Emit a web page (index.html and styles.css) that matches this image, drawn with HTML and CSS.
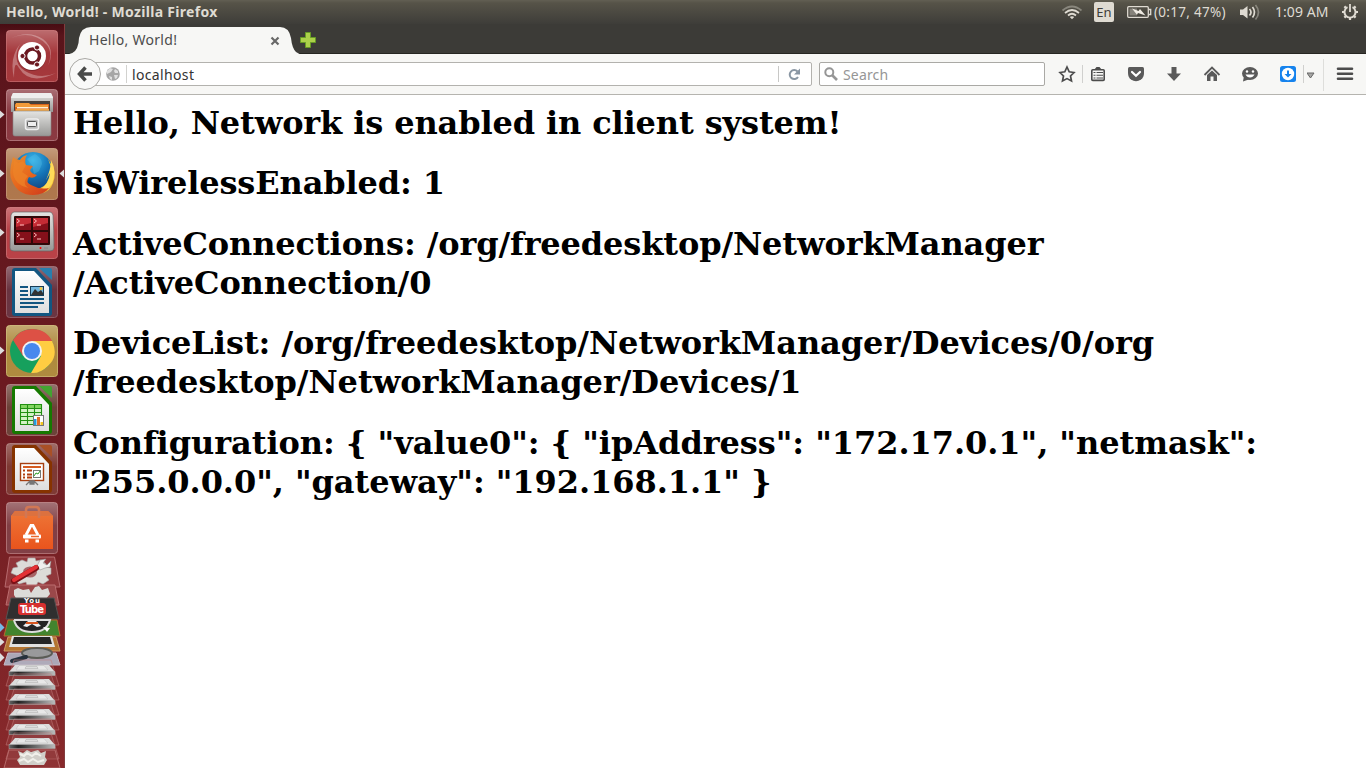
FILE: index.html
```html
<!DOCTYPE html>
<html lang="en">
<head>
<meta charset="utf-8">
<title>Hello, World!</title>
<link rel="stylesheet" href="styles.css">
</head>
<body>
<header class="panel">
  <div class="window-title">Hello, World! - Mozilla Firefox</div>
  <div class="indicators">
    <svg class="wifi" width="22" height="24" viewBox="1061 0 22 24" fill="none" stroke="#dfdbd2" stroke-width="1.7"><path d="M1062.500 10.500Q1072 2.500 1081.500 10.500" opacity=".4"/><path d="M1065 13Q1072 7 1079 13M1068 15.500Q1072 12 1076 15.500"/><path d="M1069.800 17L1072 19.300L1074.200 17Q1072 15.500 1069.800 17Z" fill="#dfdbd2" stroke="none"/></svg>
    <span class="keyboard">En</span>
    <svg class="battery" width="25" height="24" viewBox="1127 0 25 24"><rect x="1127.700" y="6.700" width="20.600" height="10.600" rx="1" fill="none" stroke="#dfdbd2" stroke-width="1.300"/><path d="M1149 9.500H1150.700V14.500H1149" fill="none" stroke="#dfdbd2" stroke-width="1.300"/><path d="M1129.500 8.500H1137V15.500H1129.500Z" fill="#85827a"/><path d="M1132 8.500L1138.500 11L1140 9L1145.500 15.500L1138 13L1137 14.700Z" fill="#eeeae2"/></svg>
    <span class="battery-text">(0:17, 47%)</span>
    <svg class="volume" width="22" height="24" viewBox="1239 0 22 24" fill="none" stroke="#dfdbd2" stroke-width="1.700"><path d="M1240 9.500H1243L1247.500 6V18.500L1243 15H1240Z" fill="#dfdbd2" stroke="none"/><path d="M1249.500 9Q1252.500 12.200 1249.500 15.500M1252.500 7Q1256.500 12.200 1252.500 17.500"/><path d="M1255.500 5Q1261.500 12.200 1255.500 19.500" opacity=".4"/></svg>
    <span class="clock">1:09 AM</span>
    <svg class="session" width="18" height="24" viewBox="1341 0 18 24" fill="none" stroke="#dfdbd2"><path d="M1347.500 7.200A5.500 5.500 0 1 0 1352.500 7.200" stroke-width="1.900"/><path d="M1350 4V12" stroke-width="1.800"/><path d="M1342 12H1344.500M1355.500 12H1358M1344.400 6.400L1346 8M1355.600 6.400L1354 8M1344.400 17.600L1346 16M1355.600 17.600L1354 16M1350 17.500V20" stroke-width="2.200"/></svg>
  </div>
</header>
<div class="desktop">
<nav class="launcher">
  <svg class="tile" viewBox="0 30 65 52">
    <defs>
      <linearGradient id="gloss" x2="0" y2="1"><stop offset="0" stop-color="#fff" stop-opacity=".32"/><stop offset=".45" stop-color="#fff" stop-opacity=".07"/><stop offset="1" stop-color="#fff" stop-opacity=".08"/></linearGradient>
      <linearGradient id="silver" x2="0" y2="1"><stop offset="0" stop-color="#e4e4e2"/><stop offset="1" stop-color="#989896"/></linearGradient>
      <linearGradient id="paper" x2="0" y2="1"><stop offset="0" stop-color="#fff"/><stop offset="1" stop-color="#dedede"/></linearGradient>
      <linearGradient id="bag" x2="0" y2="1"><stop offset="0" stop-color="#ee7637"/><stop offset="1" stop-color="#e9541d"/></linearGradient>
      <radialGradient id="sphere" cx=".5" cy=".2" r=".8"><stop offset="0" stop-color="#39b5e8"/><stop offset=".5" stop-color="#1473b6"/><stop offset="1" stop-color="#113c75"/></radialGradient>
      <linearGradient id="fox" x1=".2" y1="0" x2="1" y2="1"><stop offset="0" stop-color="#e9872b"/><stop offset=".45" stop-color="#e7671d"/><stop offset="1" stop-color="#ce381c"/></linearGradient>
      <linearGradient id="diskedge"><stop offset="0" stop-color="#666"/><stop offset=".2" stop-color="#222"/><stop offset="1" stop-color="#bbb"/></linearGradient>
    </defs>
    <rect x="6.500" y="30.500" width="51" height="51" rx="3" fill="#9d272b" stroke="#b85659"/>
    <rect x="6.500" y="30.500" width="51" height="51" rx="3" fill="url(#gloss)"/>
    <path d="M7 40Q31 28 47 45Q53 53 48 66Q56 49 43 39Q28 29 7 40M14 78Q9 58 20 44Q11 62 25 71Q40 80 56 73Q30 86 19 68Q14 58 14 78" fill="#fff" opacity=".3"/>
    <circle cx="32" cy="57" r="14" fill="#400b10" opacity=".35"/><circle cx="32" cy="56" r="14" fill="#fff"/>
    <circle cx="32.500" cy="56" r="7" fill="none" stroke="#6b1820" stroke-width="3.500"/>
    <g fill="#6b1820" stroke="#fff" stroke-width="1"><circle cx="22.500" cy="56" r="2.600"/><circle cx="37" cy="47.500" r="2.600"/><circle cx="37" cy="64.500" r="2.600"/></g>
  </svg>
  <svg class="tile" viewBox="0 89 65 52">
    <rect x="6.500" y="89.500" width="51" height="51" rx="3" fill="#812932" stroke="#a9686d"/><rect x="6.500" y="89.500" width="51" height="51" rx="3" fill="url(#gloss)"/>
    <path d="M13 93H51L53 97V112H11V97Z" fill="url(#silver)"/><path d="M13 93H51L53 98H11Z" fill="#eee"/><path d="M14 101H50V111H14Z" fill="#46403b"/><path d="M15 104H49V111H15Z" fill="#d8631c"/><path d="M16 103H29L31 105H48V107H15Z" fill="#f29b39"/><path d="M17 107H48V108.500H17Z" fill="#fff1d3"/><path d="M16 109H49V111H16Z" fill="#f6a744"/>
    <path d="M13 111H51V134Q51 136 49 136H15Q13 136 13 134Z" fill="url(#silver)" stroke="#888" stroke-width=".6"/><rect x="25.500" y="119" width="13" height="10.500" rx="2" fill="#bbb" stroke="#eee" stroke-width="1.500"/><rect x="27.500" y="121.500" width="9" height="5" rx="1" fill="#eee" stroke="#555"/>
    <path d="M0 110.500L4.500 114.500L0 118.500Z" fill="#ddd"/>
  </svg>
  <svg class="tile" viewBox="0 148 65 52">
    <rect x="6.500" y="148.500" width="51" height="51" rx="3" fill="#a86c3e" stroke="#bd8b68"/><rect x="6.500" y="148.500" width="51" height="51" rx="3" fill="url(#gloss)"/>
    <circle cx="33" cy="172.500" r="20.500" fill="url(#sphere)"/>
    <path d="M35 154Q42 158 42 164L39 171L34 174L32 165L27 159Z" fill="#57c0ea" opacity=".35"/>
    <path d="M48 159Q55 169 52 178Q46 187 33 191Q48 197 53 183Q57 173 52 163L51 167Z" fill="#f7c333"/><path d="M51 160Q57 171 52 184Q46 192 38 192Q49 184 50 173L46 180Q51 169 51 160" fill="#ffdb58"/>
    <path d="M13 157Q8 174 12 181Q18 195 33 195Q44 195 49 188Q40 190 31 185Q25 182 29 177Q34 179 37 175Q31 174 30 170L33 166L26 165Q24 160 27 155Q22 156 20 160Q16 160 13 157Z" fill="url(#fox)"/><path d="M14 160L18 163L23 161L26 165L22 172L28 176Q21 184 29 188Q14 185 13 172Z" fill="#ee8428" opacity=".7"/>
    <path d="M0 169.500L4.500 173.500L0 177.500ZM64 169.500L59.500 173.500L64 177.500Z" fill="#ddd"/>
  </svg>
  <svg class="tile" viewBox="0 207 65 52">
    <rect x="6.500" y="207.500" width="51" height="51" rx="3" fill="#b33238" stroke="#c25f63"/><rect x="6.500" y="207.500" width="51" height="51" rx="3" fill="url(#gloss)"/>
    <path d="M14 212H50Q52 212 53 215Q54 230 54 248Q54 251 50 251H14Q10 251 10 248Q10 230 11 215Q12 212 14 212Z" fill="url(#silver)" stroke="#666" stroke-width=".7"/><rect x="14" y="216" width="36" height="29" rx="1" fill="#300909"/><path d="M16 218H31V230H16ZM33 218H48V230H33ZM16 232H31V243H16ZM33 232H48V243H33Z" fill="#85101a"/><path d="M16 218H31V223L16 227ZM33 218H48V223L33 227Z" fill="#c52c35"/>
    <path d="M17 219L19.500 221L17 223M20 225H24M34 219L36.500 221L34 223M37 225H41M17 233L19.500 235L17 237M20 239H24M34 233L36.500 235L34 237M37 239H41" fill="none" stroke="#fbb" stroke-width="1"/><circle cx="40.500" cy="248" r="1" fill="red"/><path d="M44 248H48" stroke="#888"/>
    <path d="M0 228.500L4.500 232.500L0 236.500Z" fill="#ddd"/>
  </svg>
  <svg class="tile" viewBox="0 266 65 52">
    <rect x="6.500" y="266.500" width="51" height="51" rx="3" fill="#5e2432" stroke="#89515b"/><rect x="6.500" y="266.500" width="51" height="51" rx="3" fill="url(#gloss)"/>
    <path d="M15 268H36L52 285V313Q52 316 49 316H15Q12 316 12 313V271Q12 268 15 268Z" fill="#125681"/><path d="M39 268H50Q52 268 52 270V280Z" fill="#287eae"/><path d="M15 271H34L49 287V313H15Z" fill="url(#paper)"/>
    <path d="M20 287H28M20 291H28M20 295H28M20 299H44M20 303H44M20 307H38" stroke="#125681" stroke-width="1.800"/><rect x="30.500" y="286.500" width="13" height="9" fill="#72b7de" stroke="#173d56"/><path d="M31 295L35 289L38 292L41 290L43 293V295Z" fill="#333"/><circle cx="41" cy="288.500" r="1.500" fill="#f8c83c"/>
  </svg>
  <svg class="tile" viewBox="0 325 65 52">
    <rect x="6.500" y="325.500" width="51" height="51" rx="3" fill="#a8812f" stroke="#c2a861"/><rect x="6.500" y="325.500" width="51" height="51" rx="3" fill="url(#gloss)"/>
    <circle cx="32" cy="351" r="22" fill="#16a05d"/><path d="M13 340Q20 329 32 329Q46 329 52 341H32L23 356Z" fill="#dd5145"/><path d="M32 341H52Q59 356 48 366Q40 374 31 373L41 356Z" fill="#ffcd42"/><circle cx="32" cy="351" r="10" fill="#f3f3f3"/><circle cx="32" cy="351" r="8" fill="#4788ee"/><path d="M0 346.500L4.500 350.500L0 354.500Z" fill="#ddd"/>
  </svg>
  <svg class="tile" viewBox="0 384 65 52">
    <rect x="6.500" y="384.500" width="51" height="51" rx="3" fill="#603329" stroke="#9a6563"/><rect x="6.500" y="384.500" width="51" height="51" rx="3" fill="url(#gloss)"/>
    <path d="M15 386H36L52 403V431Q52 434 49 434H15Q12 434 12 431V389Q12 386 15 386Z" fill="#167900"/><path d="M39 386H50Q52 386 52 388V398Z" fill="#43a331"/><path d="M15 389H34L49 405V431H15Z" fill="url(#paper)"/>
    <path d="M20 404H42V425H20Z" fill="#d3f3c5"/><path d="M20 404H42V408H20Z" fill="#84d561"/><path d="M20.500 404.500H41.500V424.500H20.500ZM20 408.500H42M20 412.500H42M20 416.500H42M20 420.500H42M27.500 404V425M34.500 404V425" fill="none" stroke="#219011" stroke-width="1.100"/><rect x="33.500" y="415.500" width="10" height="10" fill="#fff" stroke="#777"/><path d="M34 419H36.500V425H34Z" fill="#259bdd"/><path d="M37 417H40V425H37Z" fill="#e26c26"/><path d="M40.500 422H43V425H40.500Z" fill="#f3c61e"/>
  </svg>
  <svg class="tile" viewBox="0 443 65 52">
    <rect x="6.500" y="443.500" width="51" height="51" rx="3" fill="#742a24" stroke="#9d605f"/><rect x="6.500" y="443.500" width="51" height="51" rx="3" fill="url(#gloss)"/>
    <path d="M15 445H36L52 462V490Q52 493 49 493H15Q12 493 12 490V448Q12 445 15 445Z" fill="#863300"/><path d="M39 445H50Q52 445 52 447V457Z" fill="#a95026"/><path d="M15 448H34L49 464V490H15Z" fill="url(#paper)"/>
    <rect x="20.500" y="463.500" width="23" height="17" fill="#fff" stroke="#a73f10" stroke-width="1.400"/><path d="M23 467H41" stroke="#d65b20" stroke-width="2"/><path d="M23 470.500H25M27 470.500H32M23 474.500H25M27 474.500H32M23 477.500H25M27 477.500H32" stroke="#b43f10" stroke-width="2"/><rect x="33.500" y="470.500" width="7" height="7" fill="#fff" stroke="#777"/><path d="M34 476L36 473L38 474L40 471" fill="none" stroke="#2b9c26"/><path d="M30 481L26 485M34 481L38 485M30 481H34V484H30Z" stroke="#777" stroke-width="1.300" fill="#777"/>
  </svg>
  <svg class="tile" viewBox="0 502 65 52">
    <rect x="6.500" y="502.500" width="51" height="51" rx="3" fill="#773036" stroke="#a9686b"/><rect x="6.500" y="502.500" width="51" height="51" rx="3" fill="url(#gloss)"/>
    <path d="M11 516L15 511H48L53 516V549H11Z" fill="url(#bag)"/><path d="M11 516L15 511H48L53 516Z" fill="#dc713f"/><path d="M26 518V510Q26 507 29 507H36Q39 507 39 510V518" fill="none" stroke="#d17754" stroke-width="2.500"/><path d="M26 535L31 525.500H33L38 535M25 541H28.500M35.500 541H39" fill="none" stroke="#fff" stroke-width="2.800"/><rect x="23" y="534.500" width="18" height="4" rx="1" fill="#fff"/><path d="M31 536.500H39" stroke="#ed672b" stroke-width="1.500"/>
  </svg>
  <svg class="stack" viewBox="0 554 65 214">
    <defs>
      <g id="disk"><path d="M6 24L14 -2H51L59 24Z" fill="#fff" fill-opacity=".05" stroke="#c57b7b" stroke-opacity=".5"/><path d="M15 3H49L55 10H9Z" fill="#dcdcdc"/><path d="M19 3.500H44L48 8H16Z" fill="#e8e8e8" stroke="#bbb" stroke-width=".5"/><path d="M26 4.500H37L38 6.500H25Z" fill="#ddd" stroke="#aaa" stroke-width=".5"/><path d="M9 9.500H55V13.500H9Z" fill="url(#diskedge)" stroke="#aaa" stroke-width=".5"/></g>
    </defs>
    <path d="M9.500 557H54.500L60 587H5Z" fill="#a84b50" fill-opacity=".5" stroke="#b76a6e"/>
    <path d="M28 558H35L36 561L41 560L46 564L45 567L51 568V574L46 576L49 580L43 584L38 582L36 586H27L26 582L19 584L14 579L18 576L11 573L13 568L18 567L16 563L22 560L27 562Z" fill="#dcdcd8" stroke="#aaa" stroke-width=".6"/><ellipse cx="30" cy="572" rx="7" ry="5.500" fill="#a76466"/>
    <path d="M37 566L40 560L46 559L43 563L47 565L51 561L50 567L45 568L40 570Z" fill="#eee" stroke="#888" stroke-width=".5"/><path d="M14 581L36 568" stroke="#7d1015" stroke-width="6" stroke-linecap="round"/><path d="M14 580L36 567" stroke="#e33134" stroke-width="4" stroke-linecap="round"/>
    <path d="M10 585H55L59 605H6Z" fill="#9b484a" stroke="#bb6c6e"/>
    <path d="M14 590L18 588L23 590L29 589L31 593L35 587L39 586L42 590L48 588L50 594L45 600H17L14 595Z" fill="#dcdcd8"/>
    <path d="M11 598H54L59 619H6Z" fill="#302f2f" stroke="#565150"/><rect x="18" y="603" width="28" height="12" rx="3" fill="#d6302f"/><text class="tube" x="20" y="613" textLength="24">Tube</text><text class="you" x="24" y="603" textLength="16">You</text>
    <path d="M8 620H57L60 636H4Z" fill="#42842e" stroke="#b86c2d"/><path d="M14 620H50Q47 632 32 632Q17 632 14 620" fill="#242424" stroke="#ddd" stroke-width="2"/><path d="M23 626L28 621H36L41 626L37 627L32 624L27 627Z" fill="#eee"/><path d="M26 623H38" stroke="#d75721" stroke-width="2"/><path d="M43 627L50 628L47 632Z" fill="#fff"/>
    <path d="M8 637H56L60 651H4Z" fill="#b37430" stroke="#cc9b63"/><path d="M12 636H52L55 647H9Z" fill="#e1e1df"/><path d="M14 637H50L52 644H12Z" fill="#242525"/>
    <path d="M8 653H56L60 665H4Z" fill="#aba7b7" stroke="#c2b7c3"/><ellipse cx="37" cy="653" rx="15" ry="5" fill="#99999b" stroke="#5b5c56" stroke-width="2"/><path d="M12 661L26 657" stroke="#26313d" stroke-width="4" stroke-linecap="round"/>
    <use href="#disk" y="662"/><use href="#disk" y="676"/><use href="#disk" y="691"/><use href="#disk" y="706"/><use href="#disk" y="721"/><use href="#disk" y="735"/>
    <path d="M9 750H55L60 768H4Z" fill="#a44e4e" fill-opacity=".25" stroke="#b56868"/><path d="M18 751L23 753L27 750L31 752L38 750L41 753L46 751L45 757L47 760L44 765H20L17 760L20 757Z" fill="#d1cfc9"/><path d="M20 754L24 756L27 753L32 756L36 753L41 756M19 761L24 759L28 762L33 759L38 762L44 760" fill="none" stroke="#f1f0ea" stroke-width="2"/>
    <path d="M0 623L4.500 627.500L0 632Z" fill="#75b8e5"/><path d="M0 638L4.500 642L0 646ZM0 653L4.500 657.500L0 662Z" fill="#ddd"/>
  </svg>
</nav>
<main class="browser">
  <div class="tabs">
    <div class="tab">
      <svg class="tab-shape" width="240" height="30" viewBox="65 24 240 30"><path d="M65 54V53.500Q74 53.500 77 47Q79 42 79 37Q81 26 91 26H280Q289 26 291 37Q292 47 296 51Q299 53.500 304 53.500V54Z" fill="#f7f7f5"/></svg>
      <span class="tab-title">Hello, World!</span>
      <svg class="tab-close" width="10" height="10" viewBox="0 0 10 10"><path d="M1.500 1.500L8.500 8.500M8.500 1.500L1.500 8.500" stroke="#686868" stroke-width="2.200"/></svg>
    </div>
    <svg class="new-tab" width="18" height="18" viewBox="0 0 18 18"><path d="M6.500 1.500H11.500V6.500H16.500V11.500H11.500V16.500H6.500V11.500H1.500V6.500H6.500Z" fill="#acd04a" stroke="#679b25"/></svg>
  </div>
  <div class="toolbar">
    <svg class="back" width="33" height="33" viewBox="0 0 33 33"><circle cx="16" cy="16" r="15.500" fill="#f9f9f8" stroke="#a9a8a4"/><path d="M23 16H12M16.500 9.500L10.500 16L16.500 22.500" fill="none" stroke="#494a49" stroke-width="3.500"/></svg>
    <div class="address">
      <svg class="globe" width="14" height="14" viewBox="0 0 14 14"><circle cx="7" cy="7" r="6.800" fill="#a6a6a6"/><path d="M1 4L4 1L7 2L5 5L3 6L1 7ZM9 2L12 4L12 6L9 6L8 4ZM8 8L12 8L11 11L9 12ZM3 9L6 10L6 13L4 12Z" fill="#e0e0e0"/></svg>
      <span class="url">localhost</span>
      <svg class="reload" width="33" height="22" viewBox="0 0 33 22"><path d="M.5 3V19" stroke="#c8c8c6"/><path d="M19.500 8.500A4.500 4.500 0 1 0 20 14" fill="none" stroke="#8996a3" stroke-width="2"/><path d="M22 5.500V11.500H16Z" fill="#8996a3"/></svg>
    </div>
    <div class="search"><svg width="15" height="15" viewBox="0 0 15 15" fill="none" stroke="#969696"><circle cx="5.300" cy="5.300" r="4" stroke-width="2"/><path d="M8 8L13 13" stroke-width="2.600"/></svg><span>Search</span></div>
    <div class="tools">
      <svg width="24" height="40" viewBox="1055 54 24 40"><path d="M1067 67L1069.200 71.800L1074 72.500L1070.500 76L1071.500 81L1067 78.600L1062.500 81L1063.500 76L1060 72.500L1064.800 71.800Z" fill="none" stroke="#4c4c4c" stroke-width="1.700"/></svg>
      <svg width="38" height="40" viewBox="1079 54 38 40"><path d="M1082.500 65V83" stroke="#d0d0ce"/><rect x="1091.800" y="69.800" width="12.400" height="10.600" rx="1" fill="none" stroke="#4c4c4c" stroke-width="1.600"/><path d="M1094 70L1096.500 67H1099.500L1102 70Z" fill="#4c4c4c"/><path d="M1093.500 72.500H1095.500M1096.500 72.500H1103M1093.500 75.200H1095.500M1096.500 75.200H1103M1093.500 78H1095.500M1096.500 78H1103" stroke="#4c4c4c" stroke-width="1.100"/></svg>
      <svg width="38" height="40" viewBox="1117 54 38 40"><path d="M1129.500 67H1142.500Q1144 67 1144 68.500V73Q1144 77 1141 79.500Q1136 83 1131 79.500Q1128 77 1128 73V68.500Q1128 67 1129.500 67Z" fill="#5a5a5a"/><path d="M1132 72L1136 75.800L1140 72" fill="none" stroke="#fff" stroke-width="2.200" stroke-linecap="round"/></svg>
      <svg width="38" height="40" viewBox="1155 54 38 40"><path d="M1171.500 67H1176.500V73.500H1181L1174 81L1167 73.500H1171.500Z" fill="#5a5a5a"/></svg>
      <svg width="38" height="40" viewBox="1193 54 38 40"><path d="M1204.500 75L1212 67.500L1219.500 75" fill="none" stroke="#5a5a5a" stroke-width="1.800"/><path d="M1207 75L1212 70.500L1217 75V81H1213.500V76.500H1210.500V81H1207Z" fill="#5a5a5a"/></svg>
      <svg width="38" height="40" viewBox="1231 54 38 40"><ellipse cx="1250" cy="73.500" rx="8" ry="6.500" fill="#5a5a5a"/><path d="M1244 76L1243 81.500L1250 79Z" fill="#5a5a5a"/><circle cx="1247" cy="71.500" r="1.200" fill="#fff"/><circle cx="1253" cy="71.500" r="1.200" fill="#fff"/><path d="M1245.500 74.500H1254.500Q1253 77.500 1250 77.500Q1247 77.500 1245.500 74.500Z" fill="#fff"/></svg>
      <svg width="38" height="40" viewBox="1269 54 38 40"><rect x="1280" y="66" width="16" height="16" rx="2.500" fill="#1683ed"/><circle cx="1288" cy="74" r="6.200" fill="#fff"/><path d="M1287 70.500H1289V74H1291.500L1288 77.500L1284.500 74H1287Z" fill="#1683ed"/><path d="M1303.500 65V83" stroke="#d0d0ce"/></svg>
      <svg width="16" height="40" viewBox="1307 54 16 40"><path d="M1307 73H1314L1310.500 78Z" fill="#a7a7a5" stroke="#666" stroke-width="1"/></svg>
      <svg width="43" height="40" viewBox="1323 54 43 40"><path d="M1323.500 59V91" stroke="#dededb"/><path d="M1338 68.700H1352M1338 73.700H1352M1338 78.700H1352" stroke="#4c4c4c" stroke-width="2.600" stroke-linecap="round"/></svg>
    </div>
  </div>
  <article class="page">
    <h1 class="tight">Hello, Network is enabled in client system!</h1>
    <h1 class="tight">isWirelessEnabled: 1</h1>
    <h1 class="tight">ActiveConnections: /org/freedesktop/NetworkManager<br>/ActiveConnection/0</h1>
    <h1>DeviceList: /org/freedesktop/NetworkManager/Devices/0/org<br>/freedesktop/NetworkManager/Devices/1</h1>
    <h1>Configuration: { "value0": { "ipAddress": "172.17.0.1", "netmask":<br>"255.0.0.0", "gateway": "192.168.1.1" }</h1>
  </article>
</main>
</div>
</body>
</html>
```

FILE: styles.css
```css
* { box-sizing: border-box; }
html, body { margin: 0; width: 1366px; height: 768px; overflow: hidden; }
body { background: #fff; font: 14px/24px "Noto Sans", sans-serif; white-space: nowrap; }
svg { display: block; flex: none; }
.panel { height: 24px; display: flex; justify-content: space-between; background: linear-gradient(#625f53 0, #565348 3px, #3e3d39); color: #dfdbd2; }
.window-title { padding-left: 6px; font-size: 14px; font-weight: 700; letter-spacing: .3px; }
.indicators { width: 305px; display: flex; align-items: center; }
.keyboard { width: 20px; height: 20px; flex: none; margin: 0 13px 0 11px; border-radius: 2px; background: #dfdbd2; color: #3e3d39; text-align: center; font-size: 13px; line-height: 21px; }
.battery-text { width: 86px; flex: none; padding-left: 2px; font-size: 13.5px; letter-spacing: .28px; }
.volume { margin-left: 1px; }
.clock { width: 66px; flex: none; margin-left: 14px; letter-spacing: .05px; }
.desktop { display: flex; height: 744px; }
.launcher { width: 65px; flex: none; padding-top: 6px; overflow: hidden; background: linear-gradient(#480c13, #5a141b 12px, #6b1a20 48%, #88292b); border-right: 1px solid #823c3e; }
.tile { width: 65px; height: 52px; margin-bottom: 7px; }
.stack { width: 65px; height: 214px; margin-top: -7px; }
.tube, .you { font: bold 10px "DejaVu Sans", sans-serif; fill: #fff; }
.you { font-size: 7px; }
.browser { width: 1301px; }
.tabs { height: 30px; display: flex; background: #3c3b37; border-bottom: 1px solid #272622; }
.tab { width: 240px; height: 30px; display: grid; grid-template-columns: 24px 1fr 35px; align-items: center; }
.tab-shape { grid-area: 1 / 1 / 2 / 4; }
.tab-title { grid-area: 1 / 2; color: #4c4c4c; line-height: 30px; padding-top: 1px; letter-spacing: .3px; }
.tab-close { grid-area: 1 / 3; margin-top: 2px; }
.new-tab { margin: 7px 0 0 -6px; }
.toolbar { height: 41px; display: flex; background: #f7f7f5; border-bottom: 1px solid #b5b4af; }
.back { z-index: 1; margin: 4px -8px 0 4px; }
.address { width: 718px; height: 24px; margin-top: 8px; border: 1px solid #b3b2ae; border-radius: 2px; background: #fff; display: flex; align-items: center; }
.globe { margin-left: 11px; }
.url { flex: 1; margin-left: 6px; padding-left: 5px; border-left: 1px solid #d2d2cf; color: #333; line-height: 18px; padding-top: 1px; height: 18px; letter-spacing: .35px; }
.search { width: 226px; height: 24px; margin: 8px 0 0 7px; padding-left: 4px; border: 1px solid #aaa9a5; border-radius: 2px; background: #fff; display: flex; align-items: center; gap: 4px; color: #969696; line-height: 22px; letter-spacing: .15px; }
.search span { padding-top: 2px; }
.tools { display: flex; margin-left: 10px; }
.page { padding: 8.9px 8px 0; color: #000; }
.page h1 { margin: 0 0 21.5px; font: bold 32px/39px "DejaVu Serif", serif; letter-spacing: -.055px; }
.page .tight { letter-spacing: -.12px; }
```
